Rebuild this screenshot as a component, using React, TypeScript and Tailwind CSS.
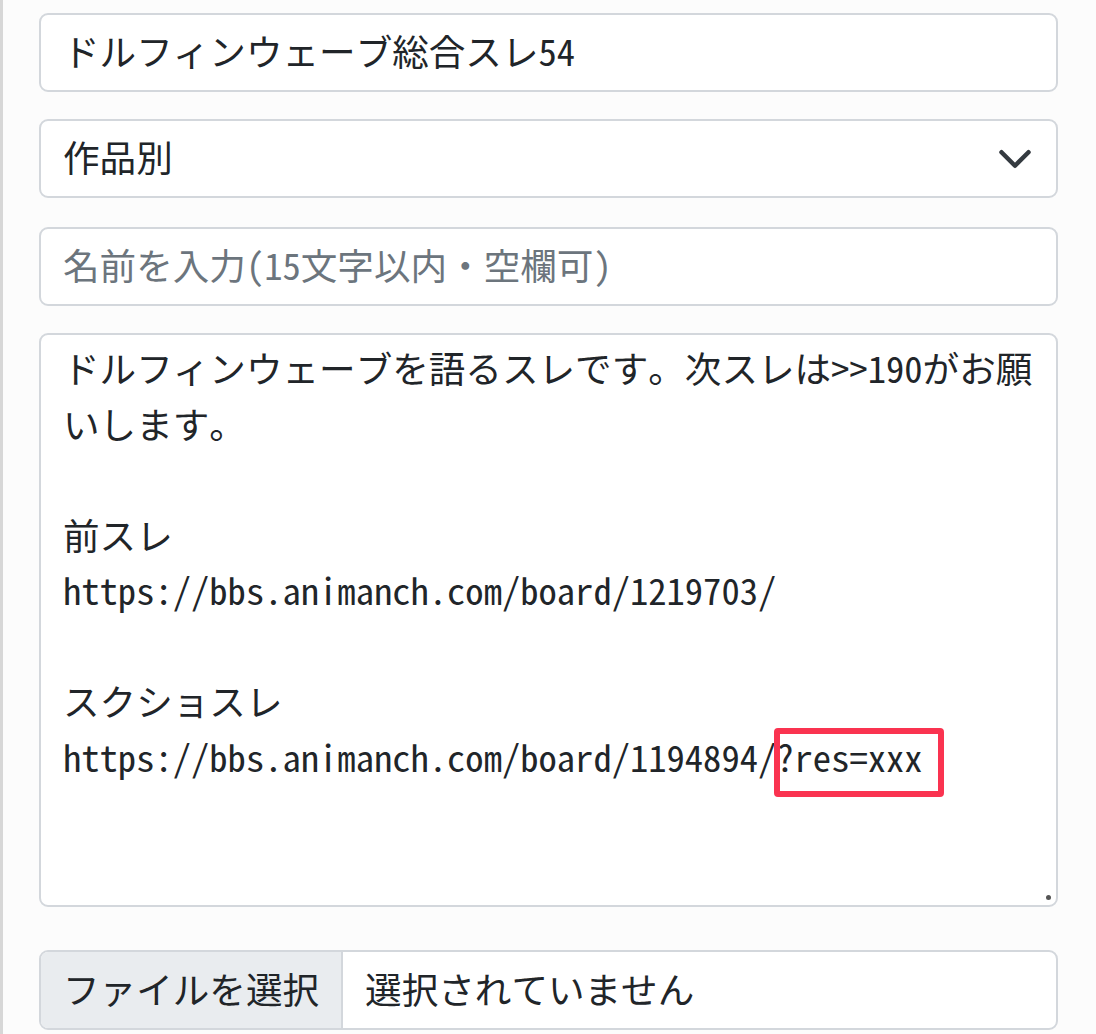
import React from 'react';

const font = { fontFamily: '"Noto Sans Mono CJK JP", "Noto Sans CJK JP", monospace' };

function Field({ children, className = '' }: { children: React.ReactNode; className?: string }) {
  return (
    <div
      className={`h-[79px] bg-white border-2 border-[#d3d7dc] rounded-[9px] flex items-center px-[22px] pb-[3px] text-[36.6px] leading-[54px] ${className}`}
    >
      {children}
    </div>
  );
}

export default function App() {
  return (
    <div
      className="min-h-[1034px] bg-[#fcfcfc] border-l-[3px] border-[#d7d7d7] pl-[36px] pr-[38px] pt-[13px] text-[#212529] font-light"
      style={font}
    >
      {/* Title */}
      <Field className="mb-[27px]">
        <span>ドルフィンウェーブ総合スレ54</span>
      </Field>

      {/* Category select */}
      <Field className="mb-[29px] justify-between pr-[23px]">
        <span>作品別</span>
        <svg viewBox="0 0 16 16" className="w-[36px] h-[36px] mt-[3px]">
          <path
            fill="none"
            stroke="#343a40"
            strokeLinecap="round"
            strokeLinejoin="round"
            strokeWidth="2"
            d="m2 5 6 6 6-6"
          />
        </svg>
      </Field>

      {/* Name */}
      <Field className="mb-[27px]">
        <span className="text-[#6c757d]">名前を入力(15文字以内・空欄可)</span>
      </Field>

      {/* Body */}
      <div className="relative h-[574px] bg-white border-2 border-[#d3d7dc] rounded-[9px] px-[22px] pt-[5px] text-[36.6px] leading-[55.5px]">
        <div>ドルフィンウェーブを語るスレです。次スレは&gt;&gt;190がお願</div>
        <div>いします。</div>
        <div>&nbsp;</div>
        <div>前スレ</div>
        <div>https://bbs.animanch.com/board/1219703/</div>
        <div>&nbsp;</div>
        <div>スクショスレ</div>
        <div>
          https://bbs.animanch.com/board/1194894/
          <span className="relative inline-block">
            ?res=xxx
            <span className="absolute -left-[2px] -right-[21px] -top-[1px] -bottom-[13px] border-[6px] border-[#fa3350] rounded-[4px]" />
          </span>
        </div>
        <span className="absolute right-[5px] bottom-[5px] w-[5px] h-[5px] rounded-full bg-[#555]" />
      </div>

      {/* File */}
      <div className="mt-[43px] h-[80px] bg-white border-2 border-[#d3d7dc] rounded-[9px] flex overflow-hidden text-[36.6px] leading-[54px]">
        <div className="bg-[#e9ecef] border-r-2 border-[#d3d7dc] px-[22px] pb-[3px] flex items-center">ファイルを選択</div>
        <div className="px-[22px] pb-[3px] flex items-center">選択されていません</div>
      </div>
    </div>
  );
}
